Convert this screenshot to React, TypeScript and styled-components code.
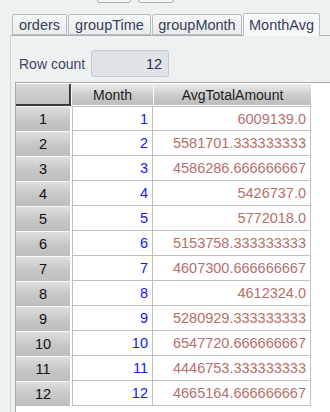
import React from "react";
import styled, { createGlobalStyle } from "styled-components";

const GlobalStyle = createGlobalStyle`
  html, body {
    margin: 0;
    padding: 0;
    background: #eef1f1;
    font-family: "Liberation Sans", Arial, sans-serif;
    overflow: hidden;
  }
`;

const Screen = styled.div`
  width: 330px;
  height: 412px;
  display: flex;
  flex-direction: column;
  overflow: hidden;
`;

const Toolbar = styled.div`
  height: 3px;
  display: flex;
  align-items: flex-end;
  gap: 7px;
  padding-left: 97px;
  overflow: hidden;
`;

const ToolButton = styled.div<{ $w: number }>`
  width: ${(p) => p.$w}px;
  height: 20px;
  flex: none;
  box-sizing: border-box;
  border: 1px solid #a9adb0;
  border-radius: 3px;
  background: #f4f5f5;
`;

const TabStrip = styled.div`
  display: flex;
  align-items: flex-end;
  margin-top: 10px;
  padding-left: 12px;
  height: 22px;
  gap: 1px;
`;

const Tab = styled.div<{ $active?: boolean; $w: number }>`
  box-sizing: border-box;
  width: ${(p) => p.$w}px;
  height: ${(p) => (p.$active ? 23 : 21)}px;
  margin-bottom: ${(p) => (p.$active ? -1 : 0)}px;
  display: flex;
  align-items: center;
  justify-content: center;
  font-size: 14.5px;
  color: #35405a;
  border: 1px solid #b9bdbf;
  border-bottom: ${(p) => (p.$active ? "none" : "1px solid #b9bdbf")};
  border-radius: 2px 2px 0 0;
  background: ${(p) =>
    p.$active ? "#f7f9f9" : "linear-gradient(#f6f8f8, #e9ecec)"};
  position: relative;
  z-index: ${(p) => (p.$active ? 1 : 0)};
`;

const Panel = styled.div`
  flex: 1;
  margin-left: 10px;
  border-top: 1px solid #a9aeb1;
  border-left: 1px solid #cdd1d2;
  padding: 14px 0 0 4px;
  display: flex;
  flex-direction: column;
  min-height: 0;
`;

const CountRow = styled.div`
  display: flex;
  align-items: center;
  padding-left: 4px;
  gap: 6px;
`;

const Label = styled.span`
  font-size: 14px;
  color: #3b4660;
`;

const CountBox = styled.div`
  box-sizing: border-box;
  width: 78px;
  height: 27px;
  border: 1px solid #c3c8cc;
  border-radius: 3px;
  background: #dfe3e8;
  display: flex;
  align-items: center;
  justify-content: flex-end;
  padding-right: 6px;
  font-size: 14.5px;
  color: #2c3446;
`;

const ScrollPane = styled.div`
  flex: 1;
  margin-top: 5px;
  border-left: 1px solid #a5a9ab;
  border-top: 1px solid #a5a9ab;
  background: #ffffff;
  padding-top: 1px;
  min-height: 0;
`;

const Grid = styled.div`
  display: grid;
  grid-template-columns: 55px 1px 81px 158px;
  width: 295px;
  font-size: 14.5px;
`;

const Corner = styled.div`
  box-sizing: border-box;
  height: 22px;
  border-right: 2px solid #3a3a3a;
  border-bottom: 2px solid #3a3a3a;
  background: linear-gradient(#d8d8d8, #c2c2c2);
`;

const Gap = styled.div`
  background: #ffffff;
`;

const HeadCell = styled.div<{ $last?: boolean }>`
  box-sizing: border-box;
  height: 21px;
  display: flex;
  align-items: center;
  justify-content: center;
  font-size: 14px;
  color: #1c1c1c;
  border-left: ${(p) => (p.$last ? "1px solid #fafafa" : "none")};
  background: linear-gradient(#ebebeb, #c8c8c8 60%, #bdbdbd);
`;

const RowHead = styled.div`
  box-sizing: border-box;
  height: 25px;
  border-top: 1px solid #f6f6f6;
  margin-right: 1px;
  display: flex;
  align-items: center;
  justify-content: center;
  color: #111;
  background: linear-gradient(#dedede, #c6c6c6 55%, #bebebe);
`;

const Cell = styled.div<{ $tone: "month" | "avg"; $first?: boolean }>`
  box-sizing: border-box;
  height: 25px;
  display: flex;
  align-items: center;
  justify-content: flex-end;
  padding-right: 4px;
  border-right: 1px solid #c0c0c0;
  border-bottom: 1px solid #c0c0c0;
  border-left: ${(p) => (p.$tone === "month" ? "1px solid #c0c0c0" : "none")};
  border-top: ${(p) => (p.$first ? "1px solid #c0c0c0" : "none")};
  color: ${(p) => (p.$tone === "month" ? "#1414ff" : "#b5706c")};
  background: #fff;
`;

const rows: [number, string][] = [
  [1, "6009139.0"],
  [2, "5581701.333333333"],
  [3, "4586286.666666667"],
  [4, "5426737.0"],
  [5, "5772018.0"],
  [6, "5153758.333333333"],
  [7, "4607300.666666667"],
  [8, "4612324.0"],
  [9, "5280929.333333333"],
  [10, "6547720.666666667"],
  [11, "4446753.333333333"],
  [12, "4665164.666666667"],
];

const tabs: [string, number][] = [
  ["orders", 55],
  ["groupTime", 83],
  ["groupMonth", 90],
  ["MonthAvg", 77],
];

export default function App() {
  return (
    <Screen>
      <GlobalStyle />
      <Toolbar>
        <ToolButton $w={34} />
        <ToolButton $w={36} />
      </Toolbar>
      <TabStrip>
        {tabs.map(([t, w]) => (
          <Tab key={t} $w={w} $active={t === "MonthAvg"}>
            {t}
          </Tab>
        ))}
      </TabStrip>
      <Panel>
        <CountRow>
          <Label>Row count</Label>
          <CountBox>12</CountBox>
        </CountRow>
        <ScrollPane>
          <Grid>
            <Corner />
            <Gap />
            <HeadCell>Month</HeadCell>
            <HeadCell $last>AvgTotalAmount</HeadCell>
            {rows.map(([m, avg], i) => (
              <React.Fragment key={m}>
                <RowHead>{m}</RowHead>
                <Gap />
                <Cell $tone="month" $first={i === 0}>
                  {m}
                </Cell>
                <Cell $tone="avg" $first={i === 0}>
                  {avg}
                </Cell>
              </React.Fragment>
            ))}
          </Grid>
        </ScrollPane>
      </Panel>
    </Screen>
  );
}
